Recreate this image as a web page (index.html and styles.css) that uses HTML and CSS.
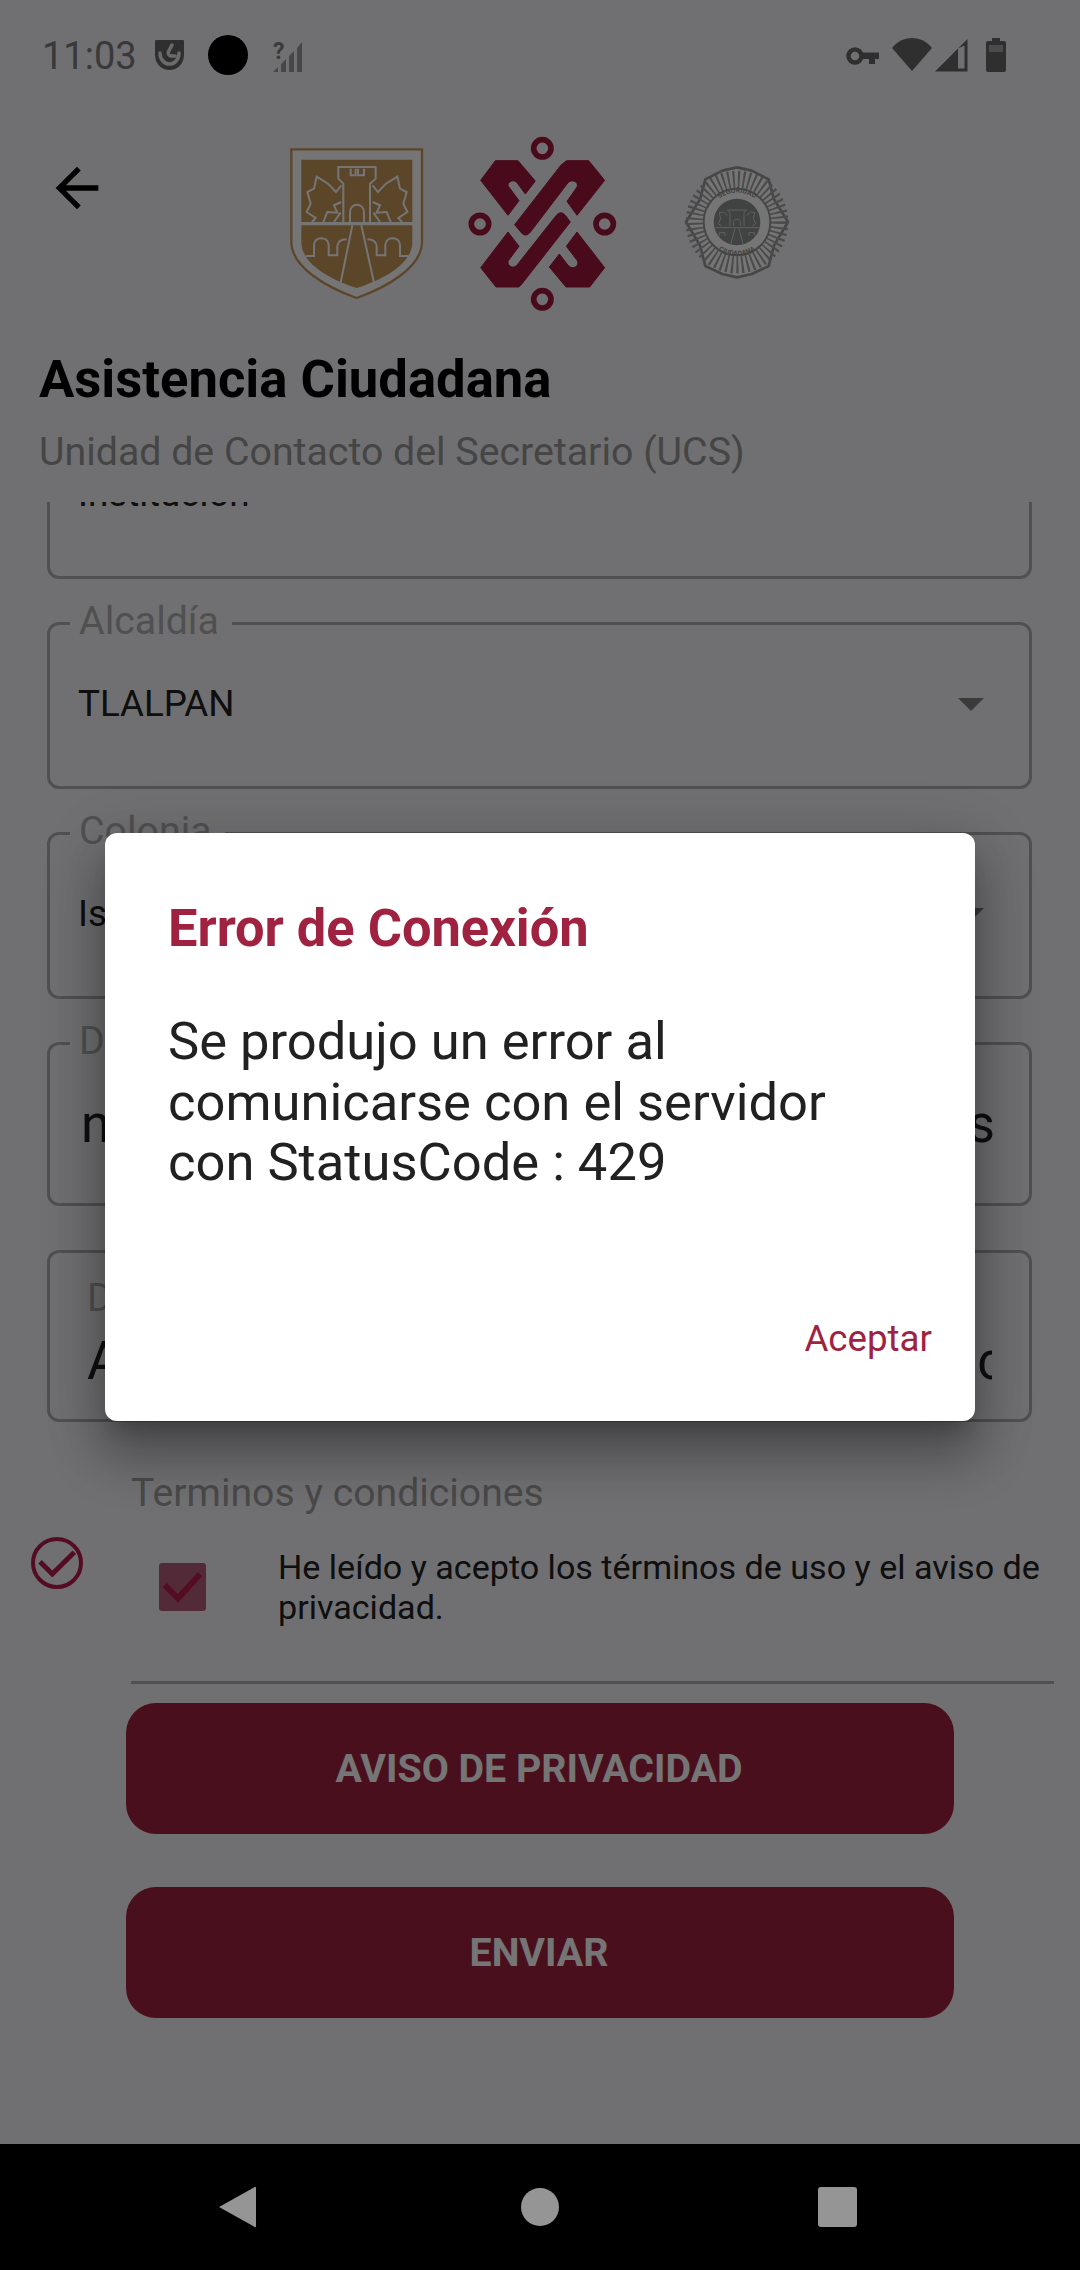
FILE: index.html
```html
<!DOCTYPE html>
<html lang="es">
<head>
<meta charset="utf-8">
<title>Asistencia Ciudadana</title>
<link rel="stylesheet" href="styles.css">
</head>
<body>
<div class="phone">
  <div class="status">
    <span class="time">11:03</span>
    <svg class="st-shield" width="29" height="30" viewBox="0 0 29 30"><path class="st-fill" d="M1 0H28a1 1 0 0 1 1 1V15C29 24 22 30 14.500 30S0 24 0 15V1a1 1 0 0 1 1-1Z"/><path class="st-cut" d="M5 13C5 19 9 24 14.500 24S24 19 24 13M17 5L13.500 11.500C12.500 14 14 16 16 16H20" /></svg>
    <span class="camera"></span>
    <svg class="st-nosignal" width="30" height="32" viewBox="0 0 30 32"><text class="st-q" x="0" y="19">?</text><path class="st-bars" d="M0 32L5 27V32ZM8 32V24L13 19V32ZM16 32V16L21 11V32ZM24 32V8L29 2V32Z"/></svg>
    <span class="st-spacer"></span>
    <svg class="st-key" width="33" height="18" viewBox="0 0 33 18"><circle class="st-ring" cx="9" cy="9" r="6.500"/><path class="st-fill" d="M15 5.500H33V12H29V17H23V12H15Z"/></svg>
    <svg class="st-wifi" width="40" height="33" viewBox="0 0 40 33"><path class="st-fill" d="M0 10C5 3.500 12 0 20 0S35 3.500 40 10L20 33Z"/></svg>
    <svg class="st-cell" width="33" height="33" viewBox="0 0 33 33"><path class="st-fill" fill-rule="evenodd" d="M0 32.500L32.500 0V32.500ZM23 9.500V29.500H29.500V6.500Z"/></svg>
    <svg class="st-batt" width="20" height="34" viewBox="0 0 20 34"><path class="st-fill" d="M6 0H14V3H18a2 2 0 0 1 2 2V32a2 2 0 0 1-2 2H2a2 2 0 0 1-2-2V5a2 2 0 0 1 2-2H6Z"/><rect class="st-batt-light" x="3" y="7" width="14" height="7"/></svg>
  </div>

  <div class="logos">
    <svg class="back" width="64" height="64" viewBox="0 0 24 24"><path d="M20 11H7.830l5.590-5.590L12 4l-8 8 8 8 1.410-1.410L7.830 13H20v-2z"/></svg>

    <svg class="shield" width="146" height="164" viewBox="0 0 438 492">
      <path class="sh-outer" d="M22 22H414V300C414 375 310 435 218 468C126 435 22 375 22 300Z"/>
      <path class="sh-field" d="M52 53H385V240H52Z"/>
      <path class="sh-field" d="M52 250H385V300C385 365 300 412 218 438C136 412 52 365 52 300Z"/>
      <g class="sh-line">
        <path d="M178 240V125L163 110V75H275V110L258 125V240"/>
        <path d="M200 80V100H215V80M222 80V100H240V80"/>
        <path d="M198 240V212C198 180 240 180 240 212V240"/>
        <path d="M172 130L156 150L132 125L98 104L90 140L70 150L80 185L68 210L95 228L84 240M172 180L150 190L160 212L130 210L118 240M150 240L170 212"/>
        <path d="M266 130L282 150L306 125L340 104L348 140L368 150L358 185L370 210L343 228L354 240M266 180L288 190L278 212L308 210L320 240M288 240L268 212"/>
        <path d="M205 250L170 422M232 250L270 422"/>
        <path d="M65 342H90V308C92 282 132 282 134 308V340H160V312C162 296 175 292 188 292"/>
        <path d="M372 342H348V308C346 282 306 282 304 308V340H278V312C276 296 263 292 250 292"/>
      </g>
    </svg>

    <svg class="knot" width="160" height="184" viewBox="0 0 480 552">
      <g class="kn-ring">
        <circle cx="241" cy="49" r="26"/><circle cx="54" cy="276" r="26"/><circle cx="428" cy="276" r="26"/><circle cx="241" cy="502" r="26"/>
      </g>
      <g class="kn-body">
        <path d="M100 86H168L220 147L190 186L165 152C156 140 132 150 140 164L171 206L138 250L56 145Z"/>
        <path d="M314 86H380L428 145L345 250L315 208L345 165C352 150 330 140 318 152L207 298C197 312 186 312 178 302L158 278L298 98Z"/>
        <path d="M56 407L138 300L171 343L140 385C132 400 154 414 166 398L283 250C292 240 302 240 310 250L325 270L178 458L170 465H102Z"/>
        <path d="M345 300L428 407L383 465H312L262 405L292 366L320 402C332 414 354 402 346 386L313 343Z"/>
      </g>
    </svg>

    <svg class="badge" width="114" height="124" viewBox="0 0 342 372">
      <defs>
        <path id="arcTop" d="M83 180A88 88 0 0 1 259 180"/>
        <path id="arcBot" d="M70 180A101 101 0 0 0 272 180"/>
      </defs>
      <path class="bd-outline" d="M171 16L215 26L266 52L282 112L324 180L282 250L266 312L215 336L171 346L127 336L76 312L60 250L18 180L60 112L76 52L127 26Z"/>
      <circle class="bd-rays" cx="171" cy="180" r="127"/>
      <circle class="bd-circle" cx="171" cy="180" r="100"/>
      <circle class="bd-core" cx="171" cy="180" r="70"/>
      <text class="bd-text"><textPath href="#arcTop" startOffset="50%">SEGURIDAD</textPath></text>
      <text class="bd-text"><textPath href="#arcBot" startOffset="50%">CIUDADANA</textPath></text>
      <g class="bd-line">
        <path d="M101 197H241"/>
        <path d="M150 192V152L142 144H200L192 152V192"/>
        <path d="M161 192V178C161 170 181 170 181 178V192"/>
        <path d="M142 160L130 150L118 152L122 170L115 185L125 192M200 160L212 150L224 152L220 170L227 185L217 192"/>
        <path d="M165 200L152 248M177 200L190 248M118 222V212H135V222M207 222V212H224V222"/>
      </g>
    </svg>
  </div>

  <h1 class="title">Asistencia Ciudadana</h1>
  <p class="subtitle">Unidad de Contacto del Secretario (UCS)</p>

  <div class="scroll">
    <div class="fields">
      <div class="field field-sm"><span class="value">Institución</span></div>
      <div class="field field-sm">
        <span class="legend">Alcaldía</span>
        <span class="value">TLALPAN</span>
        <span class="caret"></span>
      </div>
      <div class="field field-sm">
        <span class="legend">Colonia</span>
        <span class="value">Isabel</span>
        <span class="caret"></span>
      </div>
      <div class="field field-md">
        <span class="legend">Domicilio</span>
        <span class="value-lg">no</span>
        <span class="value-lg">s</span>
      </div>
      <div class="field field-stack">
        <span class="inner-label">Descripción</span>
        <div class="stack-row">
          <span class="value-lg">Asistencia</span>
          <span class="value-lg value-clip">soc</span>
        </div>
      </div>
    </div>

    <div class="terms">
      <svg class="circle-check" width="52" height="52" viewBox="0 0 52 52"><circle cx="26" cy="26" r="24"/><path d="M9 24.700L21.300 37L43.300 15.300"/></svg>
      <div class="terms-body">
        <div class="terms-title">Terminos y condiciones</div>
        <div class="terms-row">
          <span class="checkbox"><svg width="47" height="48" viewBox="0 0 47 48"><path d="M5.700 22L19 35.300L41 11.300"/></svg></span>
          <span class="terms-text">He leído y acepto los términos de uso y el aviso de privacidad.</span>
        </div>
        <div class="divider"></div>
      </div>
    </div>

    <div class="buttons">
      <button class="btn">AVISO DE PRIVACIDAD</button>
      <button class="btn">ENVIAR</button>
    </div>
  </div>

  <div class="barrier"></div>

  <div class="dialog">
    <h2 class="dialog-title">Error de Conexión</h2>
    <p class="dialog-body">Se produjo un error al comunicarse con el servidor con StatusCode : 429</p>
    <div class="dialog-actions"><span class="dialog-btn">Aceptar</span></div>
  </div>

  <div class="nav">
    <svg class="nav-back" width="38" height="44" viewBox="0 0 38 44"><path d="M0 22L35 2.500A1 1 0 0 1 37 3.500V40.500A1 1 0 0 1 35 41.500Z"/></svg>
    <span class="nav-home"></span>
    <span class="nav-recent"></span>
  </div>
</div>
</body>
</html>
```
FILE: styles.css
```css
* { box-sizing: border-box; }
html, body { margin: 0; padding: 0; }
body { font-family: Roboto, "Liberation Sans", sans-serif; background: #f4f4f8; }

.phone {
  position: relative;
  width: 1080px;
  height: 2270px;
  overflow: hidden;
  background: #f4f4f8;
  display: flex;
  flex-direction: column;
}

/* status bar */
.status { height: 110px; flex: none; display: flex; align-items: flex-start; padding-left: 42px; }
.time { font-size: 38px; line-height: 42px; margin-top: 35px; color: #7c7c7c; width: 113px; }
.st-shield { margin-top: 40px; }
.st-fill { fill: #686868; }
.st-cut { fill: none; stroke: #f4f4f8; stroke-width: 3.500; stroke-linecap: round; opacity: .9; }
.camera { width: 40px; height: 40px; border-radius: 50%; background: #000; margin: 35px 0 0 24px; position: relative; z-index: 3; }
.st-nosignal { margin: 40px 0 0 25px; overflow: visible; }
.st-q { font: 700 23px Roboto, sans-serif; fill: #808080; }
.st-bars { fill: #9c9c9c; }
.st-spacer { flex: 1; }
.st-key { margin-top: 47px; }
.st-ring { fill: none; stroke: #686868; stroke-width: 4.500; }
.st-wifi { margin: 38px 0 0 13px; }
.st-cell { margin: 39px 0 0 3px; }
.st-batt { margin: 38px 74px 0 18px; }
.st-batt-light { fill: #a4a4a4; }

/* logos */
.logos { height: 241px; flex: none; display: flex; align-items: flex-start; }
.back { margin: 46px 0 0 45px; }
.back path { fill: #000; }
.shield { margin: 32px 0 0 175px; }
.sh-outer { fill: #fff; stroke: #c89a5c; stroke-width: 7; }
.sh-field { fill: #c89a5c; }
.sh-line { fill: none; stroke: #fff; stroke-width: 6; }
.knot { margin: 22px 0 0 32px; }
.kn-ring circle { fill: none; stroke: #a0183e; stroke-width: 17; }
.kn-body path { fill: #a0183e; stroke: #a0183e; stroke-width: 3; stroke-linejoin: round; }
.badge { margin: 52px 0 0 58px; }
.bd-outline { fill: #fff; stroke: #9a9a9a; stroke-width: 8; stroke-linejoin: round; }
.bd-rays { fill: none; stroke: #a4a4a4; stroke-width: 54; stroke-dasharray: 6 9; }
.bd-circle { fill: #fff; stroke: #9a9a9a; stroke-width: 6; }
.bd-core { fill: #8f9090; }
.bd-text { font: 700 21px Roboto, sans-serif; fill: #8f9090; text-anchor: middle; }
.bd-line { fill: none; stroke: #d0d0d0; stroke-width: 3; }

/* heading */
.title { margin: 0; flex: none; font-size: 52.600px; line-height: 56px; font-weight: 700; color: #000; padding-left: 39px; }
.subtitle { margin: 24px 0 29px; flex: none; font-size: 39.300px; line-height: 42px; color: #969696; padding-left: 39px; }

/* scrolling form */
.scroll { flex: 1; min-height: 0; overflow: hidden; }
.fields { margin: -90px 48px 0 47px; display: flex; flex-direction: column; gap: 43px; }
.field { position: relative; border: 3px solid #aeaeae; border-radius: 12px; display: flex; align-items: center; justify-content: space-between; padding: 0 36px 0 28px; }
.field-sm { height: 167px; gap: 20px; padding-bottom: 3px; }
.field-md { height: 164px; padding: 0 34px 0 31px; }
.field-stack { height: 172px; margin-top: 1px; display: block; padding: 24px 37px 0 37px; }
.legend { position: absolute; left: 20px; top: -25px; padding: 0 13px 0 9px; background: #f4f4f8; font-size: 39.300px; line-height: 42px; color: #aeaeae; }
.value { font-size: 36.700px; line-height: 42px; color: #212121; }
.value-lg { font-size: 52.800px; line-height: 56px; color: #212121; white-space: nowrap; }
.inner-label { display: block; font-size: 39.300px; line-height: 42px; color: #aeaeae; }
.stack-row { display: flex; justify-content: space-between; overflow: hidden; margin-top: 14px; }
.value-clip { margin-right: -13px; }
.caret { width: 0; height: 0; border-left: 13px solid transparent; border-right: 13px solid transparent; border-top: 13px solid #7f7f7f; margin-right: 9px; margin-left: auto; }

/* terms */
.terms { display: flex; margin-top: 50px; }
.circle-check { flex: none; margin: 65px 48px 0 31px; }
.circle-check circle, .circle-check path { fill: none; stroke: #b81c4c; }
.circle-check circle { stroke-width: 4; }
.circle-check path { stroke-width: 5; }
.terms-body { width: 923px; }
.terms-title { font-size: 39.200px; line-height: 42px; color: #a0a0a0; }
.terms-row { display: flex; margin-top: 33px; }
.checkbox { flex: none; width: 47px; height: 48px; margin: 16px 72px 0 28px; background: #b55c7b; border-radius: 3px; display: block; }
.checkbox svg { display: block; }
.checkbox path { fill: none; stroke: #b81c4c; stroke-width: 6; }
.terms-text { font-size: 34.100px; line-height: 40px; color: #212121; }
.divider { height: 3px; background: #aeaeae; margin-top: 54px; }

/* buttons */
.buttons { display: flex; flex-direction: column; gap: 53px; margin: 19px 0 0 126px; width: 828px; }
.btn { height: 131px; border: 0; border-radius: 30px; background: #9f2241; color: #fff; font: 700 39.300px/42px Roboto, sans-serif; padding: 0 2px 0 0; }

/* modal */
.barrier { position: absolute; inset: 0; background: rgba(0, 0, 0, .54); z-index: 1; }
.dialog {
  position: absolute; left: 105px; top: 833px; width: 870px; height: 588px; z-index: 2;
  background: #fff; border-radius: 12px;
  padding: 67px 43px 61px 63px;
  display: flex; flex-direction: column;
  box-shadow: 0 33px 50px 5px rgba(0,0,0,.26), 0 12px 60px 10px rgba(0,0,0,.12), 0 15px 20px -9px rgba(0,0,0,.2);
}
.dialog-title { margin: 0; font-size: 52.400px; line-height: 56px; font-weight: 700; color: #9f2241; }
.dialog-body { margin: 55px 21px 0 0; font-size: 52.500px; line-height: 60.500px; color: #212121; }
.dialog-actions { margin-top: auto; display: flex; justify-content: flex-end; }
.dialog-btn { font-size: 36.700px; line-height: 42px; color: #9f2241; }

/* nav bar */
.nav { position: relative; z-index: 3; flex: none; height: 126px; background: #000; display: flex; align-items: center; padding-left: 219px; }
.nav-back path { fill: #959595; }
.nav-home { width: 38px; height: 38px; border-radius: 50%; background: #959595; margin-left: 264px; }
.nav-recent { width: 39px; height: 40px; border-radius: 3px; background: #959595; margin-left: 259px; }
```
